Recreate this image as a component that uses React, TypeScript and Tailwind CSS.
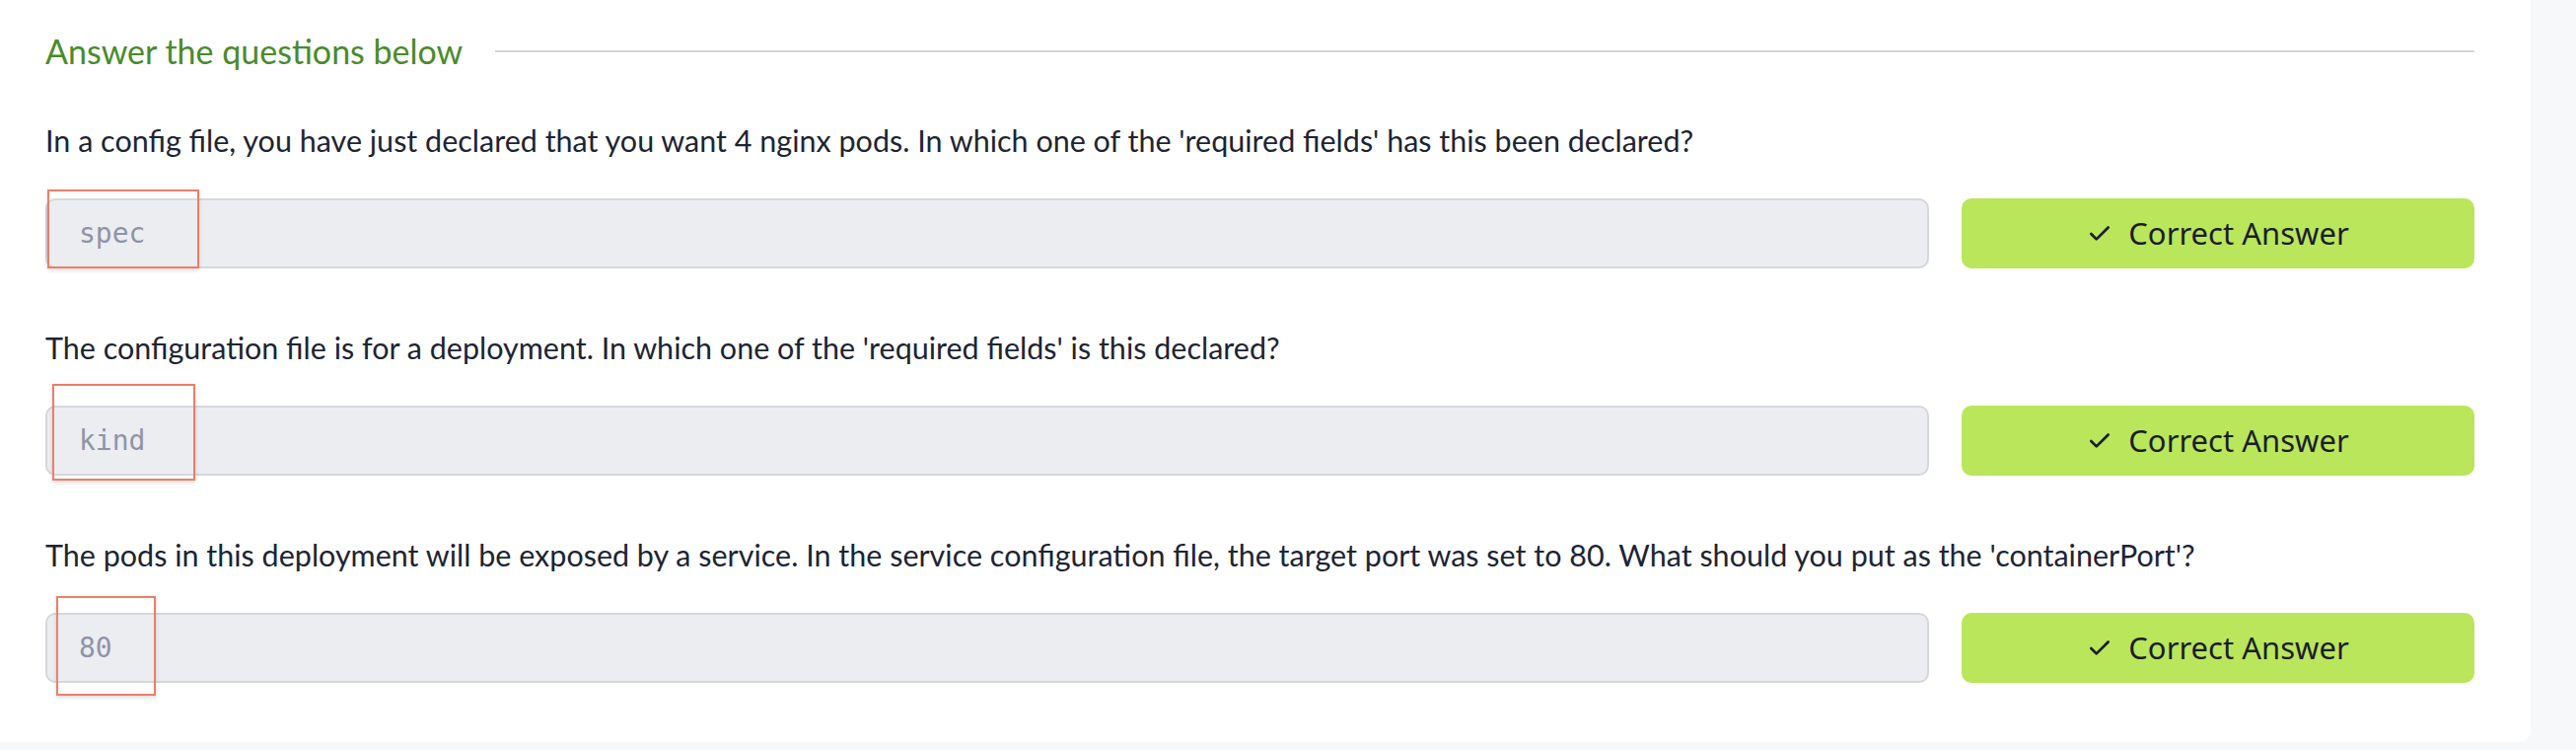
import React from "react";
import { Check } from "lucide-react";

type Question = {
    text: string;
    answer: string;
    box: string;
};

const questions: Question[] = [
    {
        text: "In a config file, you have just declared that you want 4 nginx pods. In which one of the 'required fields' has this been declared?",
        answer: "spec",
        box: "left-[2px] top-[-9px] w-[154px] h-[80px]",
    },
    {
        text: "The configuration file is for a deployment. In which one of the 'required fields' is this declared?",
        answer: "kind",
        box: "left-[7px] top-[-22px] w-[145px] h-[98px]",
    },
    {
        text: "The pods in this deployment will be exposed by a service. In the service configuration file, the target port was set to 80. What should you put as the 'containerPort'?",
        answer: "80",
        box: "left-[11px] top-[-17px] w-[101px] h-[101px]",
    },
];

function QuestionRow({ q }: { q: Question }) {
    return (
        <div className="flex flex-col">
            <p className="h-[40px] leading-[40px] text-[30.5px] text-[#1d2433] font-['Lato',sans-serif] whitespace-nowrap">
                {q.text}
            </p>
            <div className="mt-[39px] flex gap-[33px]">
                <div className="relative flex-1">
                    <div className="h-[71px] rounded-[10px] border-2 border-[#d5d7dd] bg-[#ecedf1] pl-[32px] flex items-center text-[28px] text-[#8e94a7] font-['DejaVu_Sans_Mono',monospace]">
                        {q.answer}
                    </div>
                    <div
                        className={`absolute ${q.box} border-2 border-[#ea7f69] shadow-[0_2px_4px_rgba(0,0,0,0.15)]`}
                    />
                </div>
                <button className="w-[520px] h-[71px] rounded-[10px] bg-[#b9e65a] flex items-center justify-center gap-[16px] text-[31px] text-[#1b1d2b] font-['Noto_Sans',sans-serif]">
                    <Check className="w-[26px] h-[26px]" strokeWidth={2.5} />
                    Correct Answer
                </button>
            </div>
        </div>
    );
}

export default function App() {
    return (
        <div className="min-h-[760px] bg-[#f7f8fa]">
            <div className="w-[2566px] bg-white rounded-br-[12px] pl-[46px] pr-[57px] pt-[25px] pb-[60px]">
                <div className="h-[54px] flex items-center gap-[33px]">
                    <h2 className="text-[34px] leading-[54px] text-[#4a8b2b] font-['Lato',sans-serif] whitespace-nowrap">
                        Answer the questions below
                    </h2>
                    <div className="flex-1 h-[2px] bg-[#d3d5da]" />
                </div>
                <div className="mt-[43px] flex flex-col gap-[60px]">
                    {questions.map((q) => (
                        <QuestionRow key={q.answer} q={q} />
                    ))}
                </div>
            </div>
        </div>
    );
}
